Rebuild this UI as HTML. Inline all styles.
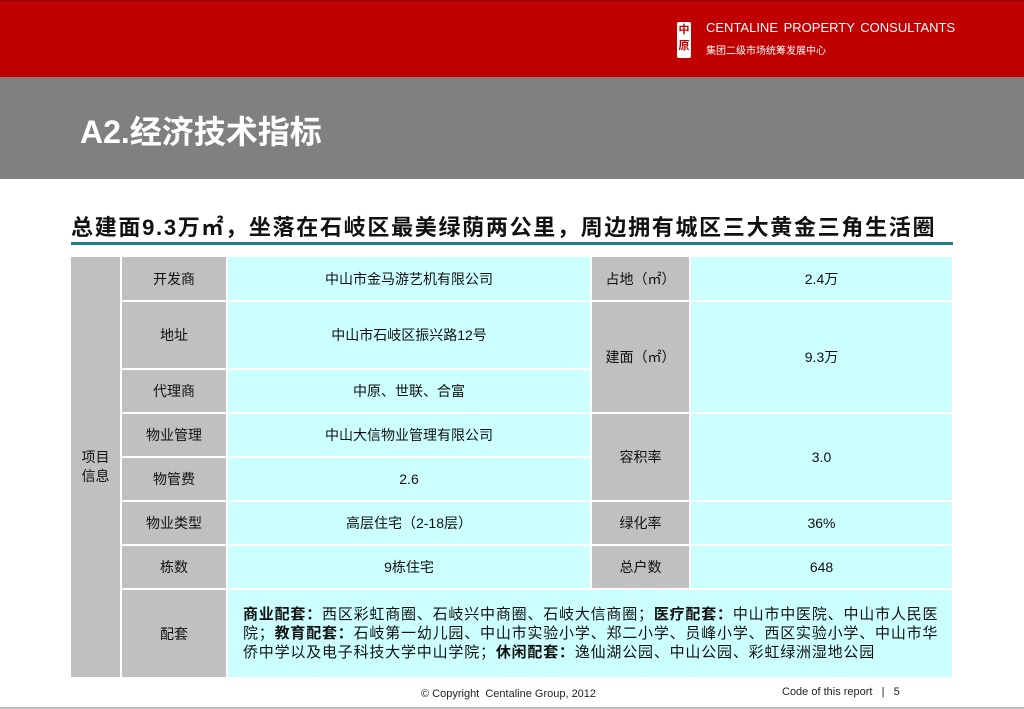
<!DOCTYPE html>
<html><head><meta charset="utf-8"><style>
*{margin:0;padding:0;box-sizing:border-box}
body{width:1024px;height:709px;position:relative;overflow:hidden;background:#fff;font-family:"Liberation Sans","Noto Sans CJK SC",sans-serif}
.a{position:absolute}
.c{position:absolute;display:flex;align-items:center;justify-content:center;font-size:14px;color:#111;text-align:center}
.g{background:#c0c0c0}.y{background:#ccffff}
</style></head><body>
<div class="a" style="left:0;top:0;width:1024px;height:77px;background:#c00000"></div>
<div class="a" style="left:0;top:0;width:1024px;height:1px;background:#800"></div>
<div class="a" style="left:677px;top:22px;width:14px;height:36px;background:#fff;border-radius:2px;color:#c00000;font-size:11px;line-height:16px;text-align:center;font-weight:bold">中<br>原</div>
<div class="a" style="left:706px;top:20px;color:#fff;font-size:13px;word-spacing:2px">CENTALINE PROPERTY CONSULTANTS</div>
<div class="a" style="left:706px;top:42px;color:#fff;font-size:10px">集团二级市场统筹发展中心</div>
<div class="a" style="left:0;top:77px;width:1024px;height:102px;background:#808080"></div>
<div class="a" style="left:80px;top:107px;color:#fff;font-size:32px;font-weight:bold">A2.经济技术指标</div>
<div class="a" style="left:71px;top:210px;color:#111;font-size:22px;font-weight:bold;white-space:nowrap;letter-spacing:1.7px">总建面9.3万㎡，坐落在石岐区最美绿荫两公里，周边拥有城区三大黄金三角生活圈</div>
<div class="a" style="left:71px;top:242px;width:882px;height:3px;background:#1e8080"></div>

<div class="c g" style="left:71px;top:257px;width:49px;height:420px;line-height:19px">项目<br>信息</div>

<div class="c g" style="left:122px;top:257px;width:104px;height:43px">开发商</div>
<div class="c y" style="left:228px;top:257px;width:362px;height:43px">中山市金马游艺机有限公司</div>
<div class="c g" style="left:592px;top:257px;width:97px;height:43px">占地（㎡）</div>
<div class="c y" style="left:691px;top:257px;width:261px;height:43px">2.4万</div>

<div class="c g" style="left:122px;top:302px;width:104px;height:66px">地址</div>
<div class="c y" style="left:228px;top:302px;width:362px;height:66px">中山市石岐区振兴路12号</div>
<div class="c g" style="left:592px;top:302px;width:97px;height:110px">建面（㎡）</div>
<div class="c y" style="left:691px;top:302px;width:261px;height:110px">9.3万</div>

<div class="c g" style="left:122px;top:370px;width:104px;height:42px">代理商</div>
<div class="c y" style="left:228px;top:370px;width:362px;height:42px">中原、世联、合富</div>

<div class="c g" style="left:122px;top:414px;width:104px;height:42px">物业管理</div>
<div class="c y" style="left:228px;top:414px;width:362px;height:42px">中山大信物业管理有限公司</div>
<div class="c g" style="left:592px;top:414px;width:97px;height:86px">容积率</div>
<div class="c y" style="left:691px;top:414px;width:261px;height:86px">3.0</div>

<div class="c g" style="left:122px;top:458px;width:104px;height:42px">物管费</div>
<div class="c y" style="left:228px;top:458px;width:362px;height:42px">2.6</div>

<div class="c g" style="left:122px;top:502px;width:104px;height:42px">物业类型</div>
<div class="c y" style="left:228px;top:502px;width:362px;height:42px">高层住宅（2-18层）</div>
<div class="c g" style="left:592px;top:502px;width:97px;height:42px">绿化率</div>
<div class="c y" style="left:691px;top:502px;width:261px;height:42px">36%</div>

<div class="c g" style="left:122px;top:546px;width:104px;height:42px">栋数</div>
<div class="c y" style="left:228px;top:546px;width:362px;height:42px">9栋住宅</div>
<div class="c g" style="left:592px;top:546px;width:97px;height:42px">总户数</div>
<div class="c y" style="left:691px;top:546px;width:261px;height:42px">648</div>

<div class="c g" style="left:122px;top:590px;width:104px;height:87px">配套</div>
<div class="c y" style="left:228px;top:590px;width:724px;height:87px;justify-content:flex-start;text-align:left;padding:0 6px 0 15px;font-size:15px;line-height:19px;letter-spacing:0.8px"><div><b>商业配套：</b>西区彩虹商圈、石岐兴中商圈、石岐大信商圈；<b>医疗配套：</b>中山市中医院、中山市人民医院；<b>教育配套：</b>石岐第一幼儿园、中山市实验小学、郑二小学、员峰小学、西区实验小学、中山市华侨中学以及电子科技大学中山学院；<b>休闲配套：</b>逸仙湖公园、中山公园、彩虹绿洲湿地公园</div></div>

<div class="a" style="left:421px;top:688px;font-size:11px;color:#222">© Copyright &nbsp;Centaline Group, 2012</div>
<div class="a" style="left:782px;top:686px;font-size:11px;color:#222;white-space:pre">Code of this report   |   5</div>
<div class="a" style="left:0;top:707px;width:1024px;height:2px;background:#bbb"></div>
</body></html>
